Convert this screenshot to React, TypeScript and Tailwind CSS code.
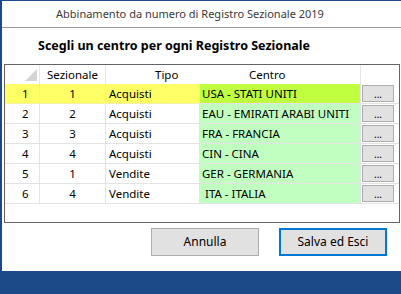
import React from "react";

const rows = [
  { n: "1", s: "1", t: "Acquisti", c: "USA - STATI UNITI", sel: true },
  { n: "2", s: "2", t: "Acquisti", c: "EAU - EMIRATI ARABI UNITI" },
  { n: "3", s: "3", t: "Acquisti", c: "FRA - FRANCIA" },
  { n: "4", s: "4", t: "Acquisti", c: "CIN - CINA" },
  { n: "5", s: "1", t: "Vendite", c: "GER - GERMANIA" },
  { n: "6", s: "4", t: "Vendite", c: "\u00a0ITA - ITALIA" },
];

export default function App() {
  return (
    <div
      className="w-[401px] h-[294px] bg-white flex flex-col overflow-hidden border-l-2 border-t border-[#1c4a89] text-[11.5px] text-black"
      style={{ fontFamily: '"Noto Sans", "Open Sans", sans-serif' }}
    >
      {/* title bar */}
      <div className="h-[27px] flex items-center pl-[54px] text-[#3a3a3a] text-[11px] shrink-0 border-b border-[#9a9a9a]">
        Abbinamento da numero di Registro Sezionale 2019
      </div>
      {/* heading */}
      <div className="h-[36px] flex items-center pl-[36px] font-bold text-[12.5px] shrink-0">
        Scegli un centro per ogni Registro Sezionale
      </div>
      {/* grid */}
      <div className="ml-[2px] w-[396px] h-[159px] border border-[#646464] flex flex-col shrink-0">
        {/* header */}
        <div className="h-[19px] flex shrink-0">
          <div className="w-[35px] border-r border-[#e6e6e6] relative">
            <svg className="absolute left-[20px] top-[4px]" width="12" height="12" viewBox="0 0 12 12">
              <polygon points="12,0 12,12 0,12" fill="#d4d4d4" />
            </svg>
          </div>
          <div className="w-[66px] border-r border-[#e6e6e6] flex items-center justify-center">Sezionale</div>
          <div className="w-[94px] flex items-center pl-[49px]">Tipo</div>
          <div className="w-[161px] border-r border-[#e6e6e6] flex items-center pl-[49px]">Centro</div>
          <div className="flex-1" />
        </div>
        {rows.map((r) => (
          <div key={r.n} className="h-[20px] flex shrink-0">
            <div className={`w-[101px] flex border-b ${r.sel ? "bg-[#ffff66] border-[#f2f2a0]" : "border-[#e3e3e3]"}`}>
              <div className={`w-[35px] border-r flex items-center pl-[17px] ${r.sel ? "border-[#f0f0a8]" : "border-[#e3e3e3]"}`}>{r.n}</div>
              <div className={`w-[66px] border-r flex items-center justify-center ${r.sel ? "border-[#f0f0a8]" : "border-[#e3e3e3]"}`}>{r.s}</div>
            </div>
            <div className={`w-[94px] border-r border-b flex items-center pl-[3px] ${r.sel ? "bg-[#ffff66] border-[#f0f0a8]" : "border-[#e3e3e3]"}`}>{r.t}</div>
            <div className={`w-[161px] border-r border-b border-[#e3e3e3] flex items-center pl-[2px] whitespace-nowrap overflow-hidden ${r.sel ? "bg-[#bfff3f]" : "bg-[#c0ffc0]"}`}>{r.c}</div>
            <div className="flex-1 border-b border-[#e3e3e3] pl-[1px] pt-[1px]">
              <div className="w-[32px] h-[17px] bg-[#e1e1e1] border border-[#adadad] flex items-end justify-center text-[10px] leading-[12px] pb-[1px]">...</div>
            </div>
          </div>
        ))}
      </div>
      {/* buttons */}
      <div className="flex justify-end gap-[20px] pr-[14px] pt-[5px] shrink-0 text-[12px]">
        <div className="w-[108px] h-[28px] bg-[#e1e1e1] border border-[#adadad] flex items-center justify-center">Annulla</div>
        <div className="w-[108px] h-[28px] bg-[#e1e1e1] border-2 border-[#0078d7] flex items-center justify-center">Salva ed Esci</div>
      </div>
      <div className="flex-1" />
      <div className="h-[23px] bg-[#1c4a89] shrink-0 -ml-[2px]" />
    </div>
  );
}
